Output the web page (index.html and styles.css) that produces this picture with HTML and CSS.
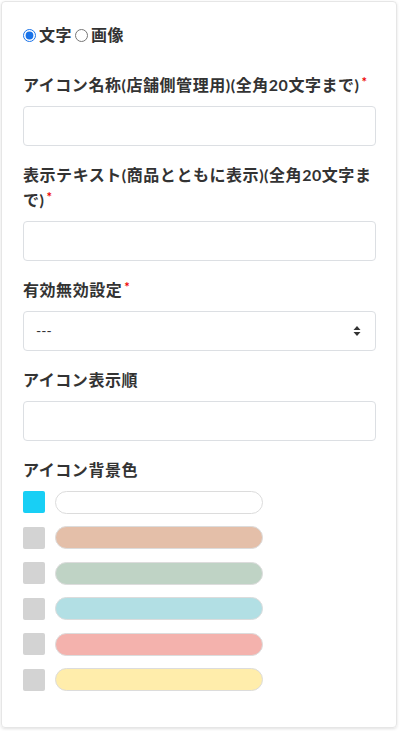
FILE: index.html
```html
<!DOCTYPE html>
<html lang="ja">
<head>
<meta charset="utf-8">
<link rel="stylesheet" href="styles.css">
</head>
<body>
<div class="card">
  <div class="radios">
    <label class="radio"><input type="radio" name="kind" checked><span>文字</span></label>
    <label class="radio"><input type="radio" name="kind"><span>画像</span></label>
  </div>

  <div class="group">
    <div class="label">アイコン名称(店舗側管理用)(全角20文字まで)<span class="req">*</span></div>
    <div class="input"></div>
  </div>

  <div class="group">
    <div class="label">表示テキスト(商品とともに表示)(全角20文字まで)<span class="req">*</span></div>
    <div class="input"></div>
  </div>

  <div class="group">
    <div class="label">有効無効設定<span class="req">*</span></div>
    <div class="input select">
      <span>---</span>
      <svg class="arrows" width="8" height="12" viewBox="0 0 8 12"><path d="M4 1 L7.5 5 H0.5 Z M4 11 L7.5 7 H0.5 Z" fill="#333"/></svg>
    </div>
  </div>

  <div class="group">
    <div class="label">アイコン表示順</div>
    <div class="input"></div>
  </div>

  <div class="group last">
    <div class="label">アイコン背景色</div>
    <div class="swatches">
      <div class="swrow"><span class="chk on"></span><span class="pill c0"></span></div>
      <div class="swrow"><span class="chk"></span><span class="pill c1"></span></div>
      <div class="swrow"><span class="chk"></span><span class="pill c2"></span></div>
      <div class="swrow"><span class="chk"></span><span class="pill c3"></span></div>
      <div class="swrow"><span class="chk"></span><span class="pill c4"></span></div>
      <div class="swrow"><span class="chk"></span><span class="pill c5"></span></div>
    </div>
  </div>
</div>
</body>
</html>
```

FILE: styles.css
```css
* { box-sizing: border-box; }
html, body { margin: 0; padding: 0; background: #fff; }
body {
  font-family: Lato, "Noto Sans CJK JP", sans-serif;
  color: #333;
  font-size: 16px;
}
.card {
  margin: 1px 3px 3px 1px;
  width: 396px;
  height: 727px;
  border: 1px solid #e6e6e6;
  border-radius: 4px;
  box-shadow: 0 1px 3px rgba(0,0,0,0.12);
  padding: 21px 20px 0 21px;
}
.radios {
  display: flex;
  align-items: center;
  height: 24px;
  margin-bottom: 26px;
}
.radio {
  display: flex;
  align-items: center;
  font-weight: 700;
  line-height: 24px;
  letter-spacing: 0.5px;
}
.radio input {
  margin: 0 3px 0 0;
  width: 13px;
  height: 13px;
  accent-color: #1a73e8;
}
.radio + .radio { margin-left: 3px; }
.group { margin-bottom: 17px; }
.label {
  font-weight: 700;
  line-height: 24.5px;
  margin-bottom: 8.5px;
  letter-spacing: 0.55px;
}
.req {
  color: #e00;
  font-size: 13px;
  vertical-align: top;
  line-height: 18px;
  margin-left: 2px;
  letter-spacing: 0;
}
.input {
  height: 40px;
  border: 1px solid #dcdfe3;
  border-radius: 4px;
  background: #fff;
}
.select {
  display: flex;
  align-items: center;
  justify-content: space-between;
  padding: 0 14px 0 12px;
  font-size: 14px;
}
.arrows { display: block; }
.swatches {
  display: flex;
  flex-direction: column;
  gap: 12.6px;
}
.swrow {
  display: flex;
  align-items: center;
  gap: 10px;
  height: 23px;
}
.chk {
  width: 22px;
  height: 22px;
  border-radius: 2px;
  background: #d3d3d3;
}
.chk.on { background: #18cff5; }
.pill {
  width: 208px;
  height: 23px;
  border-radius: 12px;
  border: 1px solid #dcdcdc;
}
.c0 { background: #fff; }
.c1 { background: #e4bfa9; }
.c2 { background: #bfd3c5; }
.c3 { background: #b2dfe4; }
.c4 { background: #f4b2ad; }
.c5 { background: #ffedab; }
```
